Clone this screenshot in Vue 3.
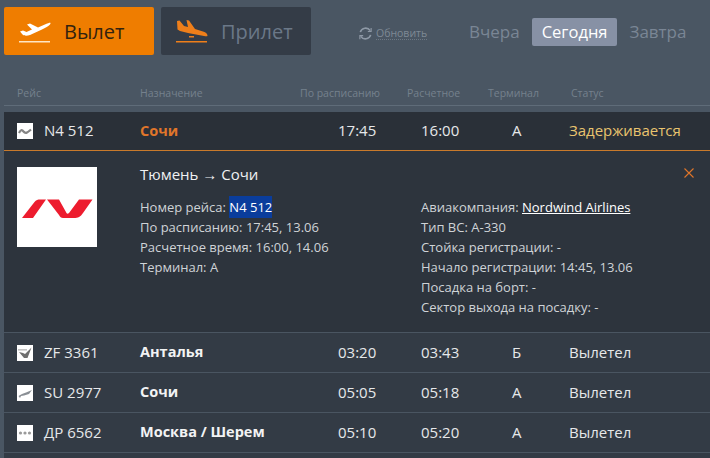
<template>
  <div class="board">
    <div class="toolbar">
      <div class="tabs">
        <button class="tab tab-active">
          <svg class="tab-icon" viewBox="0 0 32 24">
            <path d="M1 11.5 L4 10.5 L7.5 12 L13 9.5 L8 4.5 L11 3.5 L19 7.5 L27 4 C29.5 3 32 2 31.5 3.5 C31 5.5 27 7.5 23 9.5 L11 15 C8 16 5 16 3.5 14.5 Z" fill="#fff"/>
            <rect y="21" width="31" height="1.5" fill="#ffe6c4"/>
          </svg>
          <span>Вылет</span>
        </button>
        <button class="tab">
          <svg class="tab-icon" viewBox="0 0 32 24">
            <path d="M1 1 L3.5 0.5 L8 6 L12 7 L10.5 0 L13 0.5 L19 9 L27 11.5 C30 12.5 31.5 14 31.5 15.5 C31.5 16.5 30 16.5 28 16 L12 13 L4 11 L1.5 9.5 Z" fill="#ef7f1a"/>
            <rect x="13" y="16" width="5" height="1.5" fill="#ef7f1a"/>
            <rect y="21" width="31" height="1.5" fill="#ef7f1a"/>
          </svg>
          <span>Прилет</span>
        </button>
      </div>
      <a class="refresh">
        <svg viewBox="0 0 16 16" class="refresh-icon" fill="none" stroke="#8e99a6" stroke-width="1.7">
          <path d="M2.5 6.5 A5.8 5.8 0 0 1 13 5"/>
          <path d="M13.5 9.5 A5.8 5.8 0 0 1 3 11"/>
          <path d="M14 2 V5.8 H10.5" stroke-width="1.2"/>
          <path d="M2 14 V10.2 H5.5" stroke-width="1.2"/>
        </svg>
        <span>Обновить</span>
      </a>
      <div class="days">
        <span class="day">Вчера</span>
        <span class="day day-active">Сегодня</span>
        <span class="day">Завтра</span>
      </div>
    </div>

    <div class="head">
      <span>Рейс</span>
      <span>Назначение</span>
      <span>По расписанию</span>
      <span>Расчетное</span>
      <span>Терминал</span>
      <span>Статус</span>
    </div>

    <div class="table">
      <div class="row row-open">
        <div class="flight">
          <svg class="logo-small" viewBox="0 0 16 16">
            <rect width="16" height="16" fill="#fff"/>
            <path d="M2 10 C4 6 5 6.5 7 9 C9 10.5 10 10 14 6.5" fill="none" stroke="#858585" stroke-width="2.2"/>
          </svg>
          N4 512
        </div>
        <div class="dest dest-open">Сочи</div>
        <div>17:45</div>
        <div>16:00</div>
        <div>А</div>
        <div class="status-delay">Задерживается</div>
      </div>

      <div class="detail">
        <svg class="logo-big" viewBox="0 0 80 80">
          <rect width="80" height="80" fill="#fff"/>
          <path d="M5 51 L17.5 35 C19 33 21 32.5 23 32.5 H29 L16 51 Z" fill="#ed1c2e"/>
          <path d="M30 32.5 H42 L49.5 46 C50 47 51 47 52 46 L62 32.5 H75.5 L66 46 C63.5 50 61 51 57 51 H46 C44 51 43 50 42 48 Z" fill="#ed1c2e"/>
        </svg>
        <div class="detail-body">
          <div class="route">Тюмень → Сочи</div>
          <div class="facts">
            <div class="facts-col">
              <div>Номер рейса: <span class="selected">N4 512</span></div>
              <div>По расписанию: 17:45, 13.06</div>
              <div>Расчетное время: 16:00, 14.06</div>
              <div>Терминал: А</div>
            </div>
            <div class="facts-col">
              <div>Авиакомпания: <a class="airline">Nordwind Airlines</a></div>
              <div>Тип ВС: А-330</div>
              <div>Стойка регистрации: -</div>
              <div>Начало регистрации: 14:45, 13.06</div>
              <div>Посадка на борт: -</div>
              <div>Сектор выхода на посадку: -</div>
            </div>
          </div>
        </div>
        <svg class="close" viewBox="0 0 10 10" fill="none" stroke="#e0762a" stroke-width="1.1">
          <path d="M0.5 0.5 L9.5 9.5 M9.5 0.5 L0.5 9.5"/>
        </svg>
      </div>

      <div v-for="f in flights" :key="f.code" class="row">
        <div class="flight">
          <svg class="logo-small" viewBox="0 0 16 16">
            <rect width="16" height="16" fill="#fff"/>
            <g v-if="f.logo === 'check'">
              <rect x="1" y="4" width="9" height="1.6" fill="#c4c4c4"/>
              <path d="M2 7 L6 8 L8 9 L14.5 2.5 L10.5 13 H7 Z" fill="#6f6f6f"/>
            </g>
            <path v-else-if="f.logo === 'wing'" d="M1.5 11 L5 9 L9 7.5 L15 5 L12 9 L7 10.5 L4 11 L3 13 Z" fill="#8a8f95"/>
            <g v-else fill="#9a9a9a">
              <circle cx="3.5" cy="8" r="1.6"/>
              <circle cx="8" cy="8" r="1.6"/>
              <circle cx="12.5" cy="8" r="1.6"/>
            </g>
          </svg>
          {{ f.code }}
        </div>
        <div class="dest">{{ f.dest }}</div>
        <div>{{ f.sched }}</div>
        <div>{{ f.est }}</div>
        <div>{{ f.term }}</div>
        <div>{{ f.status }}</div>
      </div>
      <div class="row row-tail"></div>
    </div>
  </div>
</template>

<script setup>
const flights = [
  { code: 'ZF 3361', logo: 'check', dest: 'Анталья', sched: '03:20', est: '03:43', term: 'Б', status: 'Вылетел' },
  { code: 'SU 2977', logo: 'wing', dest: 'Сочи', sched: '05:05', est: '05:18', term: 'А', status: 'Вылетел' },
  { code: 'ДР 6562', logo: 'dots', dest: 'Москва / Шерем', sched: '05:10', est: '05:20', term: 'А', status: 'Вылетел' }
]
</script>

<style>
html, body { margin: 0; background: #4a5663; overflow: hidden; }
</style>

<style scoped>
.board {
  width: 710px;
  height: 458px;
  overflow: hidden;
  background: #4a5663;
  font-family: "Open Sans", "Noto Sans", sans-serif;
  color: #e4e7ea;
}

/* top bar */
.toolbar {
  display: flex;
  align-items: flex-start;
  padding: 7px 0 0 4px;
  height: 81px;
  box-sizing: border-box;
}
.tabs { display: flex; gap: 7px; }
.tab {
  width: 150px;
  height: 48px;
  display: flex;
  align-items: center;
  gap: 13px;
  padding: 0 0 0 15px;
  border: none;
  border-radius: 2px;
  background: #343c47;
  color: #6b7888;
  font: 500 20px "Open Sans", sans-serif;
}
.tab-active { background: #ef7d00; color: #33230f; }
.tab-icon { width: 32px; height: 24px; flex: none; margin-top: 2px; }

.refresh {
  display: flex;
  align-items: center;
  gap: 3px;
  margin: 19px 0 0 47px;
  width: 111px;
  font-size: 10.5px;
  color: #7e8995;
}
.refresh span { border-bottom: 1px dotted #6d7884; line-height: 12px; }
.refresh-icon { width: 15px; height: 15px; flex: none; }

.days { display: flex; align-items: center; margin-top: 11px; font-size: 17px; }
.day { color: #7a8695; padding: 0 12px 0 0; height: 28px; line-height: 27px; }
.day:last-child { padding: 0 0 0 12px; }
.day-active {
  padding: 0 10px;
  background: #8791a5;
  color: #fff;
  font-size: 16.5px;
  font-weight: 500;
  border-radius: 2px;
}

/* column captions */
.head {
  display: grid;
  grid-template-columns: 123px 160px 107px 81px 83px 1fr;
  align-items: center;
  margin-left: 4px;
  padding-left: 13px;
  height: 25px;
  box-sizing: border-box;
  padding-bottom: 1px;
  border-bottom: 1px solid #5f6c79;
  font-size: 10.5px;
  color: #75818d;
}

/* rows */
.table { margin: 6px 0 0 4px; background: #333b45; }
.row {
  display: grid;
  grid-template-columns: 123px 198px 83px 91px 57px 1fr;
  align-items: center;
  height: 40px;
  box-sizing: border-box;
  padding-left: 13px;
  padding-bottom: 2px;
  border-bottom: 1px solid #4a5561;
  font-size: 15px;
  color: #e6e8ea;
}
.row-open {
  height: 39px;
  background: #2a3038;
  border-bottom: 1px solid #c97a2b;
}
.row-tail { height: 10px; border: none; }
.flight { display: flex; align-items: center; gap: 11px; }
.logo-small { width: 16px; height: 16px; flex: none; margin-top: 2px; }
.dest { font-weight: 700; font-size: 14.5px; color: #f2f3f4; }
.dest-open { color: #e0762a; font-weight: 700; }
.status-delay { color: #e9c46f; }

/* expanded card */
.detail {
  position: relative;
  display: flex;
  height: 182px;
  box-sizing: border-box;
  padding: 16px 0 0 13px;
  background: #2d343d;
  border-bottom: 1px solid #4a5561;
}
.logo-big { width: 80px; height: 80px; flex: none; }
.detail-body { margin-left: 43px; flex: 1; }
.route { font-size: 15px; line-height: 20px; color: #f0f1f2; margin-bottom: 13px; margin-top: -3px; }
.facts { display: flex; font-size: 13px; line-height: 20px; color: #cfd3d7; }
.facts-col:first-child { width: 281px; }
.selected { background: #0a3d9c; color: #fff; padding: 2px 0; }
.airline { color: #fff; text-decoration: underline; }
.close {
  position: absolute;
  top: 17px;
  right: 16px;
  width: 10px;
  height: 10px;
}
</style>
